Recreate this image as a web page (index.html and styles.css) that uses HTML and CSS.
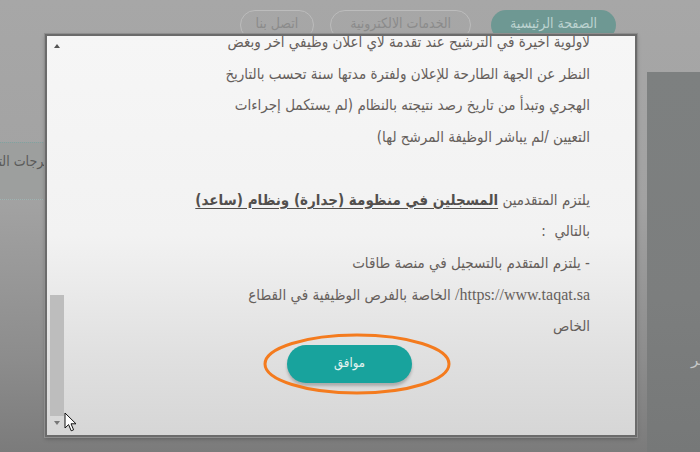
FILE: index.html
```html
<!DOCTYPE html>
<html lang="ar">
<head>
<meta charset="utf-8">
<title>شروط التقديم</title>
<link rel="stylesheet" href="styles.css">
</head>
<body>
<div class="page">
  <header class="nav">
    <span class="pill pill-outline pill-contact">اتصل بنا</span>
    <span class="pill pill-outline pill-services">الخدمات الالكترونية</span>
    <span class="pill pill-active">الصفحة الرئيسية</span>
  </header>
  <main class="behind">
    <div class="side-card"><span class="side-text">مخرجات التعلم</span></div>
    <div class="right-panel"><span class="panel-text">قر</span></div>
  </main>

  <div class="modal">
    <div class="scrollbar">
      <div class="sb-btn sb-up"><i class="tri-up"></i></div>
      <div class="sb-track"><div class="sb-thumb"></div></div>
      <div class="sb-btn sb-down"><i class="tri-down"></i></div>
      <div class="sb-end"></div>
    </div>
    <div class="content">
      <div class="text">
        <p class="line">لاولوية أخيرة في الترشيح عند تقدمة لاي اعلان وظيفي اخر وبغض</p>
        <p class="line">النظر عن الجهة الطارحة للإعلان ولفترة مدتها سنة تحسب بالتاريخ</p>
        <p class="line">الهجري وتبدأ من تاريخ رصد نتيجته بالنظام (لم يستكمل إجراءات</p>
        <p class="line">التعيين /لم يباشر الوظيفة المرشح لها)</p>
        <p class="line blank">&nbsp;</p>
        <p class="line">يلتزم المتقدمين <b class="strong">المسجلين في منظومة (جدارة) ونظام (ساعد)</b></p>
        <p class="line">بالتالي &nbsp;:</p>
        <p class="line">- يلتزم المتقدم بالتسجيل في منصة طاقات</p>
        <p class="line"><span class="url">https://www.taqat.sa/</span> الخاصة بالفرص الوظيفية في القطاع</p>
        <p class="line">الخاص</p>
      </div>
      <div class="actions">
        <button class="btn-ok" type="button">موافق</button>
        <svg class="ring" width="190" height="64" viewBox="0 0 190 64" aria-hidden="true">
          <ellipse cx="95" cy="32" rx="92" ry="29" fill="none" stroke="#f47b1e" stroke-width="3"/>
        </svg>
      </div>
    </div>
    <svg class="cursor" width="14" height="21" viewBox="0 0 14 21" aria-hidden="true">
      <path d="M1 1 L1 16 L4.6 12.6 L7.2 18.8 L9.6 17.8 L7 11.8 L12 11.8 Z" fill="#ffffff" stroke="#111111" stroke-width="1" stroke-linejoin="round"/>
    </svg>
  </div>
</div>
</body>
</html>
```
FILE: styles.css
```css
html, body {
  margin: 0;
  padding: 0;
}
body {
  width: 700px;
  height: 452px;
  overflow: hidden;
  font-family: "DejaVu Sans", "Noto Sans", sans-serif;
  background: linear-gradient(180deg, #a7a7a7 0%, #a2a2a2 45%, #8c8c8c 80%, #7b7b7b 100%);
}
.page {
  position: relative;
  width: 700px;
  height: 452px;
}

/* background navigation */
.nav {
  display: flex;
  justify-content: flex-end;
  align-items: flex-start;
  gap: 16px;
  padding: 10px 84px 0 0;
  height: 40px;
  box-sizing: border-box;
  direction: ltr;
}
.pill {
  display: inline-flex;
  align-items: center;
  justify-content: center;
  height: 30px;
  box-sizing: border-box;
  border-radius: 15px;
  font-family: "DejaVu Sans Condensed", "DejaVu Sans", sans-serif;
  font-size: 14px;
  white-space: nowrap;
  padding: 0 14px 4px;
}
.pill-outline {
  border: 1px solid #bcbcbc;
  color: #8b8b8b;
}
.pill-contact {
  padding: 0 15px 4px;
}
.pill-services {
  padding: 0 19px 4px;
}
.pill-active {
  background: #6e9893;
  color: #bcd3d0;
  padding: 0 19px 4px;
  margin-left: 4px;
}

.behind {
  display: flex;
  justify-content: space-between;
  align-items: flex-start;
  height: 412px;
}
.side-card {
  margin-top: 102px;
  width: 59px;
  height: 58px;
  box-sizing: border-box;
  border-top: 1px dotted #7fa3a1;
  border-bottom: 1px dotted #9fb3b2;
  background: #9d9f9e;
  direction: rtl;
  overflow: hidden;
  white-space: nowrap;
  padding: 10px 0 0 0;
  font-family: "DejaVu Sans Condensed", "DejaVu Sans", sans-serif;
  font-size: 14px;
  color: #5a5a5a;
}
.right-panel {
  margin-top: 32px;
  width: 53px;
  height: 380px;
  background: linear-gradient(180deg, #7d8080 0%, #7c7e7e 60%, #767878 100%);
  padding: 278px 0 0 44px;
  box-sizing: border-box;
  overflow: hidden;
  white-space: nowrap;
}
.panel-text {
  color: #c4c6c6;
  font-size: 15px;
  direction: rtl;
}

/* modal dialog */
.modal {
  position: absolute;
  left: 45px;
  top: 34px;
  width: 592px;
  height: 403px;
  box-sizing: border-box;
  border: 2px solid #6b6b6b;
  box-shadow: 0 0 0 1px #8e8e8e, 0 2px 4px rgba(0, 0, 0, 0.25);
  background: linear-gradient(180deg, #f6f6f6 0%, #f2f2f2 50%, #e0e0e0 80%, #d6d6d6 100%);
  display: flex;
  direction: ltr;
}
.scrollbar {
  width: 14px;
  margin-left: 3px;
  display: flex;
  flex-direction: column;
}
.sb-btn {
  display: flex;
  align-items: center;
  justify-content: center;
}
.sb-up {
  height: 20px;
}
.sb-down {
  height: 14px;
}
.sb-end {
  height: 5px;
}
.tri-up {
  width: 0;
  height: 0;
  border-left: 3.5px solid transparent;
  border-right: 3.5px solid transparent;
  border-bottom: 4px solid #555;
}
.tri-down {
  width: 0;
  height: 0;
  border-left: 3.5px solid transparent;
  border-right: 3.5px solid transparent;
  border-top: 4px solid #777;
}
.sb-track {
  flex: 1;
  display: flex;
  flex-direction: column;
  justify-content: flex-end;
}
.sb-thumb {
  height: 121px;
  background: #bdbdbd;
}

.content {
  flex: 1;
  overflow: hidden;
  display: flex;
  flex-direction: column;
}
.text {
  margin-top: -9px;
  padding-right: 45px;
  direction: rtl;
  text-align: right;
  color: #66605c;
  font-family: "DejaVu Sans Condensed", "DejaVu Sans", sans-serif;
  font-size: 15px;
}
.line {
  margin: 0;
  height: 31.5px;
  line-height: 31.5px;
  white-space: nowrap;
}
.strong {
  color: #524f4d;
  text-decoration: underline;
  text-underline-offset: 3px;
}
.url {
  font-family: "Liberation Serif", "DejaVu Serif", serif;
  font-size: 16px;
}

.actions {
  position: relative;
  display: flex;
  justify-content: center;
  margin-top: 3px;
}
.btn-ok {
  width: 125px;
  height: 38px;
  border: none;
  border-radius: 19px;
  background: #18a39d;
  color: #e3f2f0;
  font-family: "DejaVu Sans Condensed", "DejaVu Sans", sans-serif;
  font-size: 13px;
  font-weight: normal;
  box-shadow: 0 3px 3px rgba(0, 0, 0, 0.22);
  padding: 0 0 3px;
}
.ring {
  position: absolute;
  left: 50%;
  top: -13px;
  margin-left: -88px;
  pointer-events: none;
}
.cursor {
  position: absolute;
  left: 17px;
  top: 376px;
}
```
